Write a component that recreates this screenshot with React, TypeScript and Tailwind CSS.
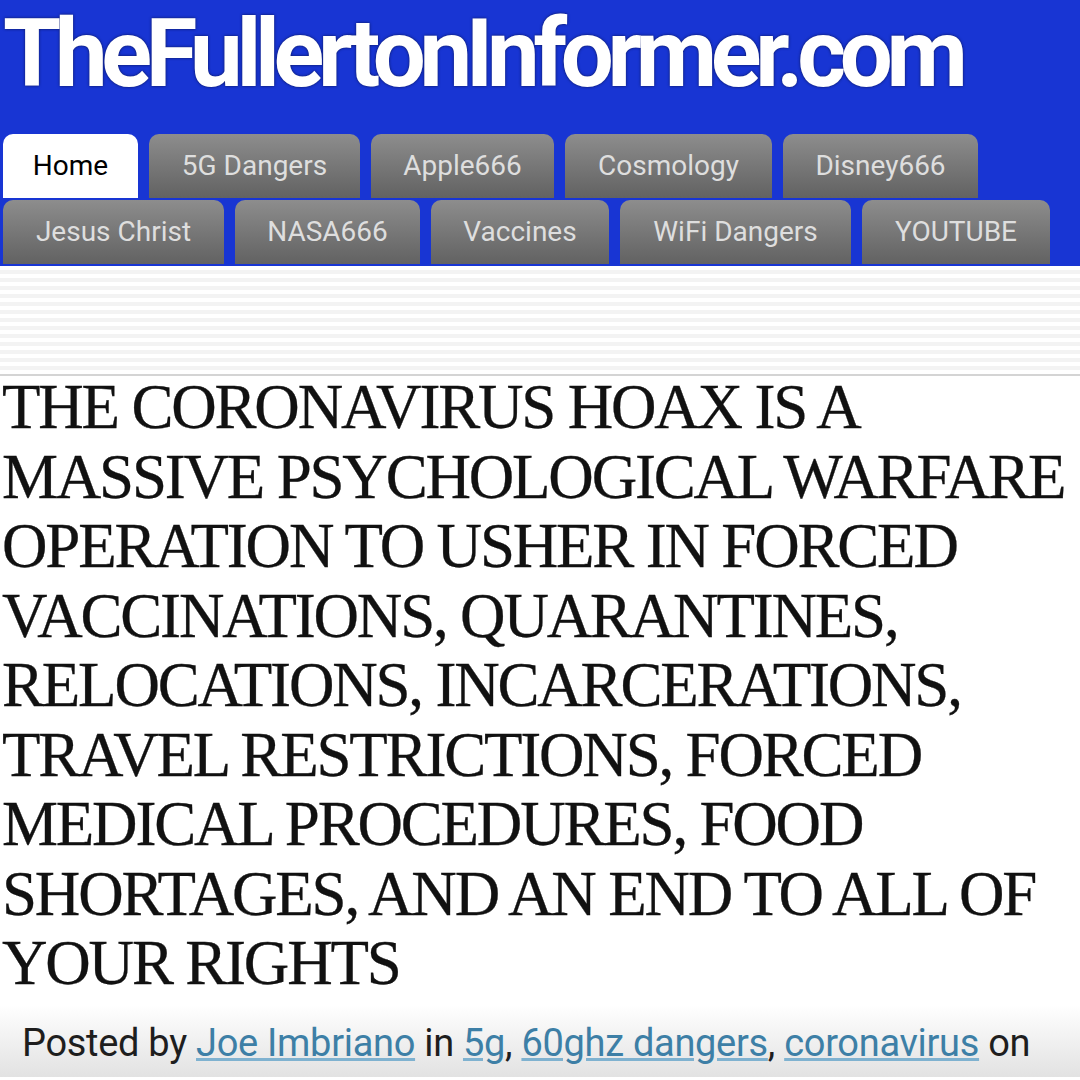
const row1 = ['5G Dangers', 'Apple666', 'Cosmology', 'Disney666']
const row2 = ['Jesus Christ', 'NASA666', 'Vaccines', 'WiFi Dangers', 'YOUTUBE']

const Tab = ({ label, active, w }: { label: string; active?: boolean; w: string }) => {
  return (
    <div
      className={`${w} h-[64px] rounded-t-[10px] flex items-center justify-center text-[28px] ${
        active
          ? 'bg-white text-black'
          : 'bg-gradient-to-b from-[#8d8d8d] to-[#626262] text-[#dedede]'
      }`}
    >
      {label}
    </div>
  )
}

const headline =
  'THE CORONAVIRUS HOAX IS A MASSIVE PSYCHOLOGICAL WARFARE OPERATION TO USHER IN FORCED VACCINATIONS, QUARANTINES, RELOCATIONS, INCARCERATIONS, TRAVEL RESTRICTIONS, FORCED MEDICAL PROCEDURES, FOOD SHORTAGES, AND AN END TO ALL OF YOUR RIGHTS'

export default function App() {
  const w1 = ['w-[211px]', 'w-[183px]', 'w-[207px]', 'w-[195px]']
  const w2 = ['w-[221px]', 'w-[185px]', 'w-[178px]', 'w-[231px]', 'w-[188px]']

  return (
    <div className="w-[1080px] h-[1080px] overflow-hidden bg-white font-['Roboto',sans-serif]">
      <header className="bg-[#1835d3] h-[266px] flex flex-col">
        <h1 className="pl-[3px] h-[134px] text-[94px] font-bold text-white tracking-[-6.3px] leading-[108px] [text-shadow:0_0_3px_#0a1450]">
          TheFullertonInformer.com
        </h1>
        <div className="flex gap-[11px] pl-[3px] h-[66px] pb-[2px]">
          <Tab label="Home" active w="w-[135px]" />
          {row1.map((t, i) => (
            <Tab key={t} label={t} w={w1[i]} />
          ))}
        </div>
        <div className="flex gap-[11px] pl-[3px]">
          {row2.map((t, i) => (
            <Tab key={t} label={t} w={w2[i]} />
          ))}
        </div>
      </header>
      <div className="h-[110px] border-b-2 border-[#d4d4d4] bg-[repeating-linear-gradient(to_bottom,#ffffff_0px,#ffffff_4px,#f3f3f3_4px,#f3f3f3_8px)]" />
      <h2 className="pl-[2px] -mt-[3px] text-[63px] leading-[69.5px] tracking-[-2.2px] text-[#111] [-webkit-text-stroke:0.3px_#111] font-['Liberation_Serif',serif]">
        {headline}
      </h2>
      <div className="mt-[6px] h-[72px] flex items-center pt-[6px] pl-[22px] text-[38px] text-[#1e1e1e] bg-gradient-to-b from-white to-[#e2e2e2] tracking-[-0.3px]">
        <span className="whitespace-nowrap">
          Posted by{' '}
          <span className="text-[#3d7fa6] underline decoration-[#7fb2d0]">Joe Imbriano</span> in{' '}
          <span className="text-[#3d7fa6] underline decoration-[#7fb2d0]">5g</span>,{' '}
          <span className="text-[#3d7fa6] underline decoration-[#7fb2d0]">60ghz dangers</span>,{' '}
          <span className="text-[#3d7fa6] underline decoration-[#7fb2d0]">coronavirus</span> on
        </span>
      </div>
    </div>
  )
}
